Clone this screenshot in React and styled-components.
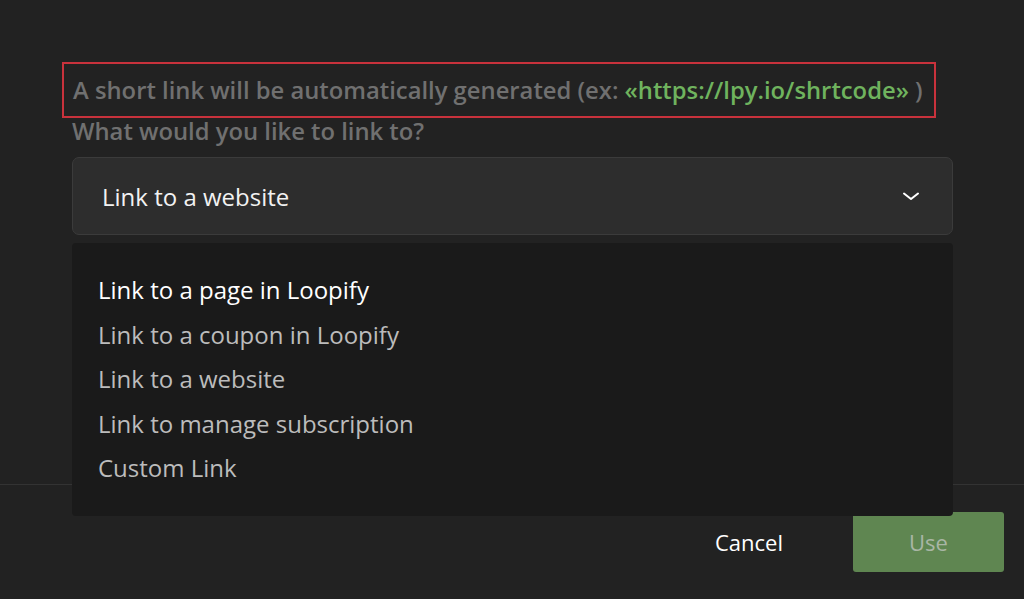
import React from "react";
import styled, { createGlobalStyle } from "styled-components";

const Global = createGlobalStyle`
  html, body { margin: 0; padding: 0; background: #222222; }
  body { font-family: "Open Sans", "Noto Sans", sans-serif; }
  * { box-sizing: border-box; }
`;

const Page = styled.div`
  width: 1024px;
  height: 599px;
  background: #222222;
  display: flex;
  flex-direction: column;
  overflow: hidden;
`;

const Content = styled.div`
  height: 484px;
  padding: 62px 71px 0 72px;
  position: relative;
`;

const Highlight = styled.div`
  margin-left: -10px;
  width: 874px;
  height: 56px;
  border: 2px solid #c9323c;
  padding: 0 9px;
  display: flex;
  align-items: center;
`;

const Label = styled.div`
  font-size: 23.8px;
  font-weight: 600;
  color: #707070;
  line-height: 28px;
  white-space: nowrap;
  margin-top: ${(p) => p.$mt || 0}px;
`;

const Url = styled.span`
  color: #6fb35e;
`;

const SelectWrap = styled.div`
  position: relative;
  margin-top: 12px;
`;

const Select = styled.div`
  height: 78px;
  background: #2d2d2d;
  border: 1px solid #3b3b3b;
  border-radius: 7px;
  display: flex;
  align-items: center;
  justify-content: space-between;
  padding: 0 33px 0 29px;
  font-size: 24px;
  color: #f2f2f2;
`;

const Menu = styled.ul`
  position: absolute;
  left: 0;
  right: 0;
  top: 86px;
  height: 273px;
  margin: 0;
  list-style: none;
  background: #1a1a1a;
  border-radius: 4px;
  padding: 25px 26px 25px 26px;
  z-index: 2;
`;

const Item = styled.li`
  height: 44.5px;
  line-height: 44.5px;
  font-size: 24px;
  color: ${(p) => (p.$active ? "#ffffff" : "#bcbcbc")};
  white-space: nowrap;
`;

const Footer = styled.div`
  flex: 1;
  border-top: 1px solid #333333;
  display: flex;
  justify-content: flex-end;
  align-items: flex-start;
  padding: 27px 20px 0 0;
  gap: 70px;
`;

const CancelButton = styled.button`
  background: none;
  border: none;
  height: 60px;
  padding: 0;
  font-family: inherit;
  font-size: 22px;
  color: #ffffff;
`;

const UseButton = styled.button`
  width: 151px;
  height: 60px;
  border: none;
  border-radius: 3px;
  background: #5f8651;
  color: #a9b6a5;
  font-family: inherit;
  font-size: 22px;
`;

const Chevron = () => (
  <svg width="16" height="9" viewBox="0 0 16 9" fill="none">
    <path d="M1 1.5 L8 7 L15 1.5" stroke="#ffffff" strokeWidth="2" strokeLinecap="round" strokeLinejoin="round" />
  </svg>
);

const options = [
  "Link to a page in Loopify",
  "Link to a coupon in Loopify",
  "Link to a website",
  "Link to manage subscription",
  "Custom Link",
];

export default function App() {
  return (
    <Page>
      <Global />
      <Content>
        <Highlight>
          <Label>
            A short link will be automatically generated (ex: <Url>«https://lpy.io/shrtcode»</Url> )
          </Label>
        </Highlight>
        <Label $mt={-1}>What would you like to link to?</Label>
        <SelectWrap>
          <Select>
            <span>Link to a website</span>
            <Chevron />
          </Select>
          <Menu>
            {options.map((o, i) => (
              <Item key={o} $active={i === 0}>{o}</Item>
            ))}
          </Menu>
        </SelectWrap>
      </Content>
      <Footer>
        <CancelButton>Cancel</CancelButton>
        <UseButton>Use</UseButton>
      </Footer>
    </Page>
  );
}
